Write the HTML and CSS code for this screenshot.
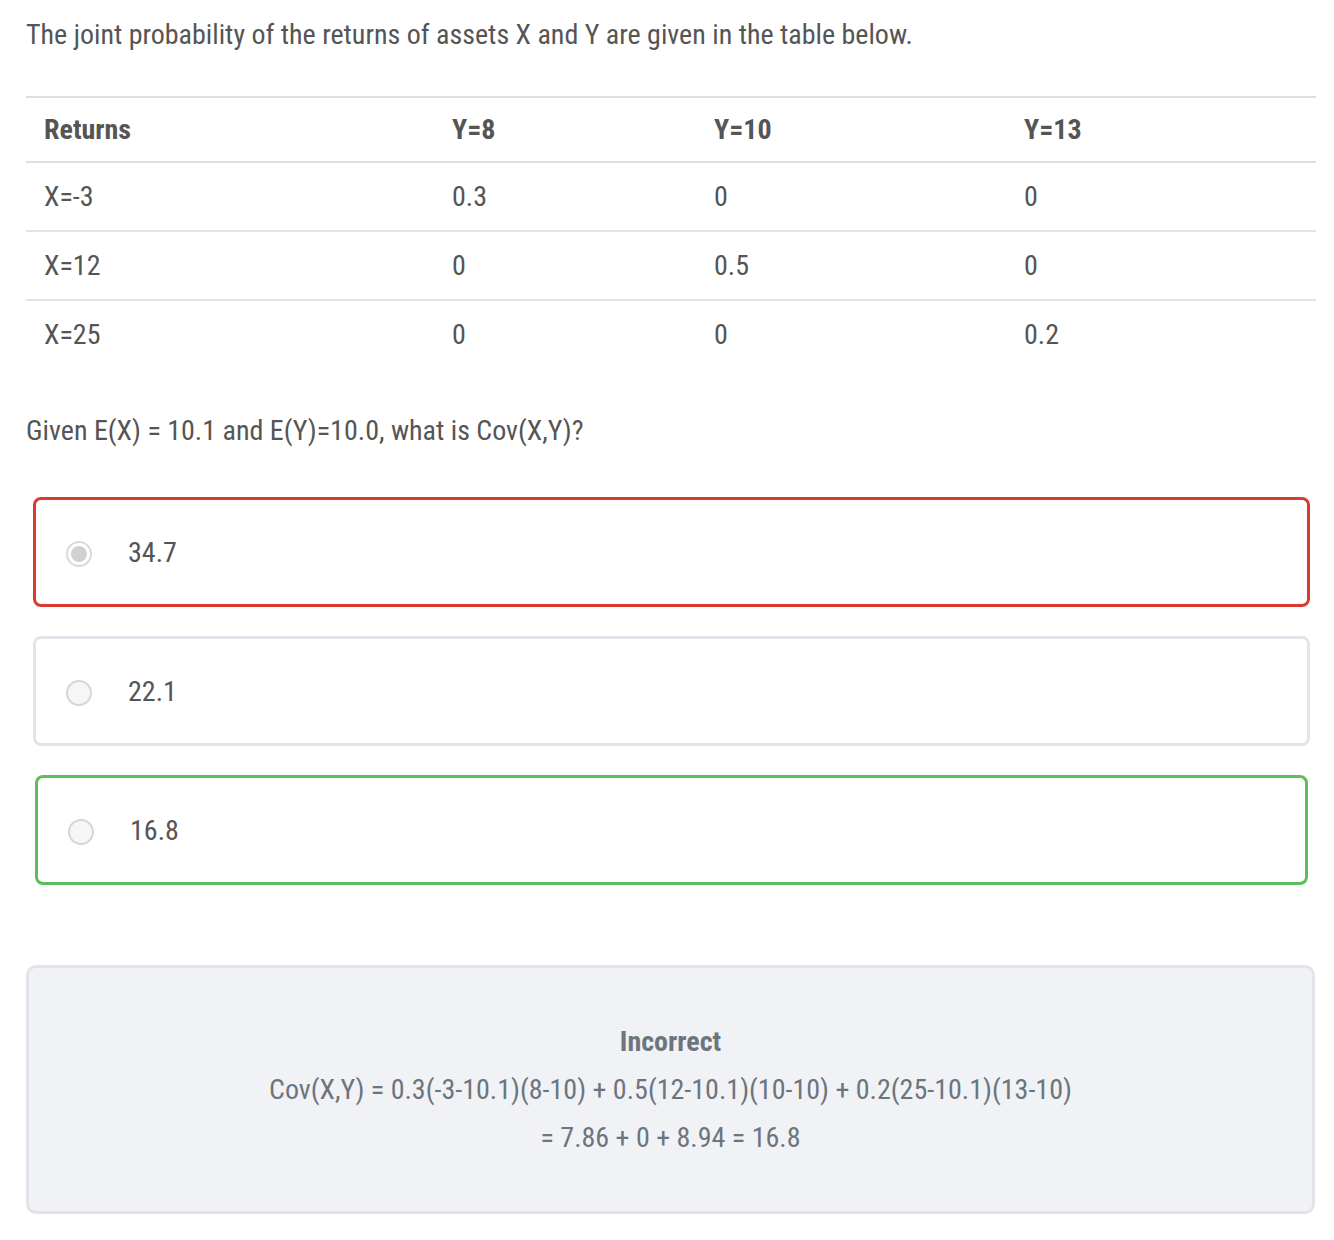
FILE: index.html
```html
<!DOCTYPE html>
<html>
<head>
<meta charset="utf-8">
<link rel="stylesheet" href="styles.css">
</head>
<body>
<div class="page">
  <p class="intro">The joint probability of the returns of assets X and Y are given in the table below.</p>
  <table class="prob">
    <thead>
      <tr><th class="c1">Returns</th><th class="c2">Y=8</th><th class="c3">Y=10</th><th class="c4">Y=13</th></tr>
    </thead>
    <tbody>
      <tr><td>X=-3</td><td>0.3</td><td>0</td><td>0</td></tr>
      <tr><td>X=12</td><td>0</td><td>0.5</td><td>0</td></tr>
      <tr><td>X=25</td><td>0</td><td>0</td><td>0.2</td></tr>
    </tbody>
  </table>
  <p class="question">Given E(X) = 10.1 and E(Y)=10.0, what is Cov(X,Y)?</p>
  <div class="options">
    <div class="option wrong"><span class="radio checked"></span><span class="label">34.7</span></div>
    <div class="option"><span class="radio"></span><span class="label">22.1</span></div>
    <div class="option right"><span class="radio"></span><span class="label">16.8</span></div>
  </div>
  <div class="feedback">
    <div class="fb-title">Incorrect</div>
    <div class="fb-line">Cov(X,Y) = 0.3(-3-10.1)(8-10) + 0.5(12-10.1)(10-10) + 0.2(25-10.1)(13-10)</div>
    <div class="fb-line">= 7.86 + 0 + 8.94 = 16.8</div>
  </div>
</div>
</body>
</html>
```
FILE: styles.css
```css
html, body {
  margin: 0;
  padding: 0;
  background: #ffffff;
}
body {
  font-family: Roboto, "Noto Sans", sans-serif;
  font-stretch: 75%;
  color: #555555;
  font-size: 28px;
}
.page {
  padding: 15px 18px 0 26px;
}
.intro {
  margin: 0;
  line-height: 40px;
}
.prob {
  margin-top: 41px;
  width: 1290px;
  border-collapse: collapse;
  border-top: 2px solid #dedede;
}
.prob th, .prob td {
  text-align: left;
  padding: 0 0 0 18px;
  font-size: 28px;
}
.prob th {
  height: 63px;
  font-weight: 700;
  border-bottom: 2px solid #dedede;
}
.prob td {
  height: 67px;
  border-bottom: 2px solid #e2e2e2;
}
.prob tbody tr:last-child td {
  border-bottom: none;
}
.c1 { width: 390px; }
.c2 { width: 244px; }
.c3 { width: 292px; }
.c4 { width: auto; }
.question {
  margin: 43px 0 0 0;
  line-height: 40px;
}
.options {
  margin-top: 46px;
  display: flex;
  flex-direction: column;
  gap: 29px;
  padding: 0 6px 0 7px;
}
.option {
  height: 104px;
  border: 3px solid #e2e4e9;
  border-radius: 8px;
  display: flex;
  align-items: center;
  padding-left: 30px;
  gap: 36px;
}
.option.wrong {
  border-color: #dc3a2e;
}
.option.right {
  border-color: #5cbe5a;
  margin: 0 2px;
}
.radio {
  width: 22px;
  height: 22px;
  margin-top: 4px;
  border-radius: 50%;
  border: 2px solid #d6d6d6;
  background: #f6f6f6;
  box-sizing: content-box;
  flex: none;
  position: relative;
}
.radio.checked {
  background: #ffffff;
  border-color: #dadada;
}
.radio.checked::after {
  content: "";
  position: absolute;
  left: 3px;
  top: 3px;
  width: 16px;
  height: 16px;
  border-radius: 50%;
  background: #d0d0d0;
}
.label {
  font-size: 28px;
}
.feedback {
  margin-top: 80px;
  width: 1283px;
  height: 243px;
  box-sizing: content-box;
  background: #f0f2f6;
  border: 3px solid #e2e4e9;
  border-radius: 10px;
  display: flex;
  flex-direction: column;
  align-items: center;
  justify-content: center;
  color: #6c757d;
  font-size: 28px;
}
.fb-title {
  font-weight: 700;
  line-height: 48px;
}
.fb-line {
  line-height: 48px;
}
```
